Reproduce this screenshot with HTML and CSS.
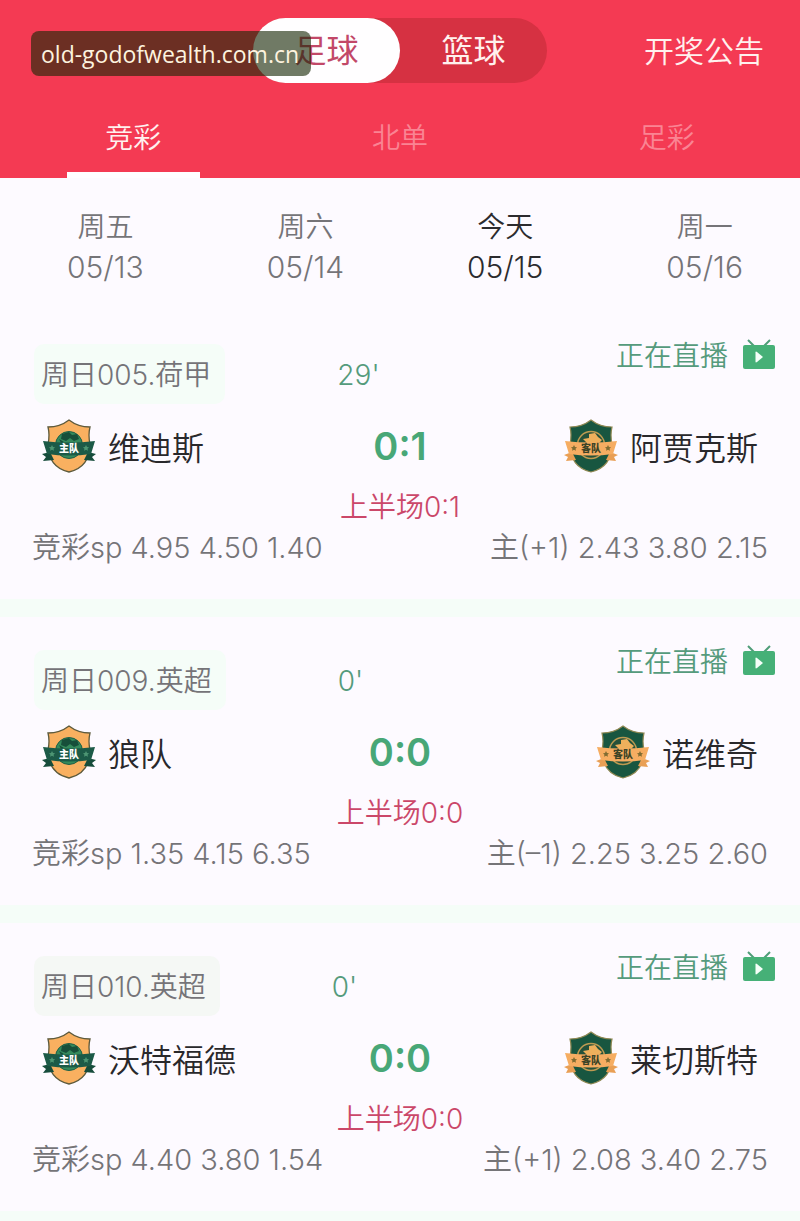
FILE: index.html
```html
<!DOCTYPE html>
<html lang="zh-CN">
<head>
<meta charset="utf-8">
<meta name="viewport" content="width=device-width, initial-scale=1">
<title>开奖公告</title>
<link rel="stylesheet" href="styles.css">
</head>
<body>
<svg class="defs" aria-hidden="true">
  <symbol id="home" viewBox="0 0 54 54">
    <path d="M27 1Q18 8 6 8Q8 16 6 25C6 41 14 50 27 53C40 50 48 41 48 25Q46 16 48 8Q36 8 27 1Z" fill="#f9b060" stroke="#5d5a3c" stroke-width="1.3"/>
    <circle cx="27" cy="26" r="13.5" fill="#358a5c" stroke="#1d5e46"/>
    <path d="M20 15l7-2 3 3 5-1 2 5-5 2-4-3-4 3-5-2zM17 20l5 3-3 1z" fill="#174f3a"/>
    <path d="M8 33L0 35l4 3-3 4 11-1zM46 33l8 2-4 3 3 4-11-1z" fill="#164c3b"/>
    <path d="M1 22Q27 25 53 22L49 35Q27 38 5 35Z" fill="#1c5a47"/>
    <path d="M10 26l1 2 2 .3-1.500 1.500.5 2-2-1-2 1 .5-2L7 28.300l2-.3zM44 26l1 2 2 .3-1.500 1.500.5 2-2-1-2 1 .5-2-1.500-1.500 2-.3z" fill="#4d9573"/>
    <text x="27" y="33" text-anchor="middle" class="crest-text" fill="#fff">主队</text>
  </symbol>
  <symbol id="away" viewBox="0 0 54 54">
    <path d="M27 1Q18 8 6 8Q8 16 6 25C6 41 14 50 27 53C40 50 48 41 48 25Q46 16 48 8Q36 8 27 1Z" fill="#185640" stroke="#8e8751" stroke-width="1.2"/>
    <circle cx="27" cy="26" r="13.500" fill="#25513a" stroke="#bd9a51" stroke-width="1.500"/>
    <path d="M19 20l6-1 0-4 6-1 3 4 4 3-3 3H23z" fill="#eeb05c"/>
    <path d="M8 33L0 36l4 2-2 4 10-1zM46 33l8 3-4 2 2 4-10-1z" fill="#e99f55"/>
    <path d="M1 22Q27 25 53 22L49 35Q27 38 5 35Z" fill="#f6ad62"/>
    <path d="M10 26l1 2 2 .3-1.500 1.500.5 2-2-1-2 1 .5-2L7 28.300l2-.3zM44 26l1 2 2 .3-1.500 1.500.5 2-2-1-2 1 .5-2-1.500-1.500 2-.3z" fill="#806c32"/>
    <text x="27" y="33" text-anchor="middle" class="crest-text" fill="#3c4427">客队</text>
  </symbol>
  <symbol id="tv" viewBox="0 0 32 30">
    <path d="M5 1L12 8M27 1L20 8" stroke="#4f9d78" stroke-width="2" fill="none"/>
    <rect y="6" width="32" height="24" rx="2" fill="#46b077"/>
    <path d="M12.500 13.500Q12.500 12 14 13L20 18L14 23Q12.500 24 12.500 22.500Z" fill="#f5fff9"/>
  </symbol>
</svg>

<header class="header">
  <div class="topbar">
    <div class="switch">
      <button type="button" class="switch-item switch-on">足球</button>
      <button type="button" class="switch-item">篮球</button>
    </div>
    <a class="notice" href="#">开奖公告</a>
    <span class="site">old-godofwealth.com.cn</span>
  </div>
  <nav class="tabs">
    <a class="tab tab-on" href="#">竞彩</a>
    <a class="tab" href="#">北单</a>
    <a class="tab" href="#">足彩</a>
  </nav>
</header>

<nav class="dates">
  <a class="date" href="#"><span>周五</span><span class="day">05/13</span></a>
  <a class="date" href="#"><span>周六</span><span class="day">05/14</span></a>
  <a class="date date-on" href="#"><span>今天</span><span class="day">05/15</span></a>
  <a class="date" href="#"><span>周一</span><span class="day">05/16</span></a>
</nav>

<main>
  <article class="match">
    <div class="head">
      <span class="league">周日005.荷甲</span>
      <span class="minute">29'</span>
      <a class="live" href="#"><span class="live-text">正在直播</span><svg class="tv"><use href="#tv"/></svg></a>
    </div>
    <div class="teams">
      <div class="team"><svg class="crest"><use href="#home"/></svg><span class="name">维迪斯</span></div>
      <strong class="score">0:1</strong>
      <div class="team team-away"><svg class="crest"><use href="#away"/></svg><span class="name">阿贾克斯</span></div>
    </div>
    <p class="half">上半场0:1</p>
    <div class="odds"><span>竞彩sp 4.95 4.50 1.40</span><span>主(+1) 2.43 3.80 2.15</span></div>
  </article>

  <article class="match">
    <div class="head">
      <span class="league">周日009.英超</span>
      <span class="minute">0'</span>
      <a class="live" href="#"><span class="live-text">正在直播</span><svg class="tv"><use href="#tv"/></svg></a>
    </div>
    <div class="teams">
      <div class="team"><svg class="crest"><use href="#home"/></svg><span class="name">狼队</span></div>
      <strong class="score">0:0</strong>
      <div class="team team-away"><svg class="crest"><use href="#away"/></svg><span class="name">诺维奇</span></div>
    </div>
    <p class="half">上半场0:0</p>
    <div class="odds"><span>竞彩sp 1.35 4.15 6.35</span><span>主(–1) 2.25 3.25 2.60</span></div>
  </article>

  <article class="match">
    <div class="head">
      <span class="league league-grey">周日010.英超</span>
      <span class="minute">0'</span>
      <a class="live" href="#"><span class="live-text">正在直播</span><svg class="tv"><use href="#tv"/></svg></a>
    </div>
    <div class="teams">
      <div class="team"><svg class="crest"><use href="#home"/></svg><span class="name">沃特福德</span></div>
      <strong class="score">0:0</strong>
      <div class="team team-away"><svg class="crest"><use href="#away"/></svg><span class="name">莱切斯特</span></div>
    </div>
    <p class="half">上半场0:0</p>
    <div class="odds"><span>竞彩sp 4.40 3.80 1.54</span><span>主(+1) 2.08 3.40 2.75</span></div>
  </article>
</main>
</body>
</html>
```

FILE: styles.css
```css
* {
  box-sizing: border-box;
}

body {
  margin: 0;
  background: #fdfaff;
  color: #757478;
  font-family: Inter, "Noto Sans CJK SC", sans-serif;
  font-size: 28px;
  font-weight: 350;
  line-height: 40px;
}

a {
  color: inherit;
  text-decoration: none;
}

.defs {
  position: absolute;
  width: 0;
  height: 0;
}

.crest-text {
  font-size: 10px;
  font-weight: 900;
}

.header {
  background: #f43a53;
  color: #fff1ee;
}

.topbar {
  position: relative;
  display: grid;
  grid-template-columns: 1fr auto 1fr;
  align-items: center;
  padding: 18px 36px 0;
}

.switch {
  grid-column: 2;
  display: flex;
  background: #d63142;
  border-radius: 33px;
}

.switch-item {
  width: 147px;
  height: 65px;
  padding: 0;
  border: 0;
  border-radius: 33px;
  background: transparent;
  color: #fff1ee;
  font: inherit;
  font-size: 32px;
  font-weight: 400;
}

.switch-on {
  background: #fffeff;
  color: #c24868;
}

.notice {
  justify-self: end;
  font-size: 30px;
}

.site {
  position: absolute;
  left: 31px;
  top: 31px;
  padding: 2px 12px 0 10px;
  border-radius: 8px;
  background: rgba(24, 40, 6, 0.62);
  color: #fdf3df;
  font-family: "Open Sans", "Noto Sans", sans-serif;
  font-size: 23px;
  font-weight: 400;
  line-height: 43px;
}

.tabs {
  display: grid;
  grid-template-columns: repeat(3, 1fr);
  padding-top: 13px;
}

.tab {
  display: flex;
  flex-direction: column;
  align-items: center;
  height: 82px;
  padding-top: 22px;
  color: #fa8493;
}

.tab-on {
  color: #fff1ee;
}

.tab-on::after {
  content: "";
  width: 50%;
  height: 6px;
  margin-top: auto;
  background: #fffdff;
}

.dates {
  display: flex;
  justify-content: space-between;
  padding: 29px 57px 24px 67px;
}

.date {
  display: flex;
  flex-direction: column;
  align-items: center;
}

.day {
  font-size: 30px;
}

.date-on {
  color: #2c2b2e;
}

.match {
  padding: 23px 0 29px;
  border-bottom: 18px solid #f5fdf8;
}

.head {
  display: flex;
  align-items: flex-start;
  padding: 0 25px 0 34px;
}

.league {
  margin-top: 10px;
  padding: 2px 14px 0 7px;
  border-radius: 10px;
  background: #f5fdf8;
  line-height: 58px;
}

.league-grey {
  background: #f5f8f5;
}

.minute {
  margin: 10px 0 0 112px;
  padding-top: 2px;
  color: #559b7c;
  line-height: 58px;
}

.live {
  display: flex;
  align-items: center;
  gap: 15px;
  margin-left: auto;
  color: #559b7c;
}

.live-text {
  padding-top: 4px;
  line-height: 36px;
}

.tv {
  width: 32px;
  height: 30px;
}

.teams {
  display: grid;
  grid-template-columns: 1fr auto 1fr;
  align-items: center;
  height: 84px;
  padding: 0 42px;
}

.team {
  display: flex;
  align-items: center;
  gap: 12px;
  color: #29282b;
  font-size: 32px;
}

.name {
  padding-top: 6px;
}

.team-away {
  justify-content: flex-end;
}

.crest {
  width: 54px;
  height: 54px;
}

.score {
  color: #48a777;
  font-size: 38px;
  font-weight: 600;
}

.half {
  margin: 0;
  padding-top: 1px;
  color: #cb4769;
  line-height: 36px;
  text-align: center;
}

.odds {
  display: flex;
  justify-content: space-between;
  padding: 1px 32px 0;
  font-size: 29px;
  line-height: 44px;
}
```
